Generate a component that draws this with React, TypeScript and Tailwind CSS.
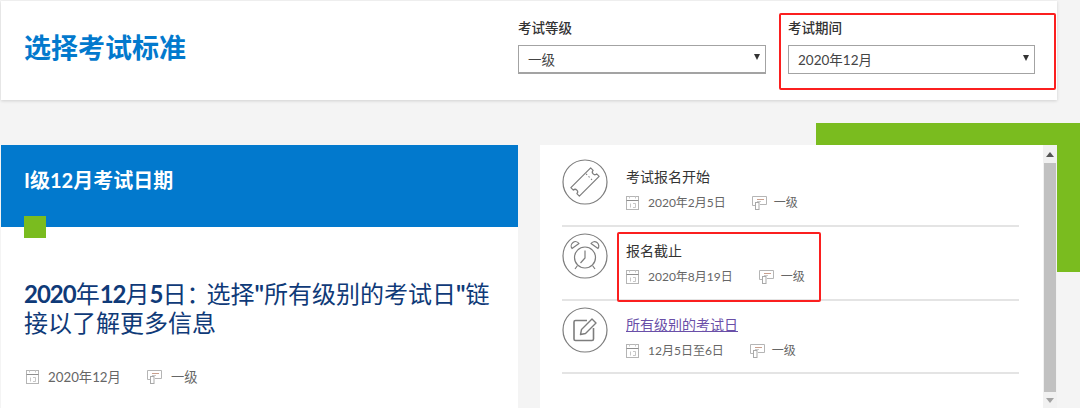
const cjk = "font-['Lato','Noto_Sans_CJK_SC',sans-serif]";

function CalendarIcon() {
    return (
        <svg width="13" height="14" viewBox="0 0 13 14" fill="none" stroke="#b5b5b5" strokeWidth="1">
            <rect x="0.5" y="0.5" width="12" height="13" />
            <path d="M0.5 4.500h12" stroke="#8f8f8f" />
            <path d="M3.500 0.500v2M9.500 0.500v2" stroke="#c9c9c9" />
            <path d="M4.500 7.500v4M7 7.500h2.500v4H7" stroke="#b9b9b9" strokeWidth="0.8" />
        </svg>
    );
}

function LevelIcon() {
    return (
        <svg width="15" height="14" viewBox="0 0 15 14" fill="none" stroke="#b5b5b5" strokeWidth="1">
            <path d="M3 9.500H0.500V0.500h14v8H8" />
            <path d="M5 3.500h7" stroke="#c9a08e" />
            <path d="M5 5.500h4" stroke="#c9c9c9" />
            <rect x="3.500" y="6.500" width="3.500" height="7" stroke="#a9a9a9" />
        </svg>
    );
}

function Meta({ date, level, gap, size = "text-[12px]", levelGap = "ml-[7px]" }: { date: string; level: string; gap: string; size?: string; levelGap?: string }) {
    return (
        <div className={`flex items-center ${size} leading-[16px] text-[#666]`}>
            <CalendarIcon />
            <span className="ml-[9px]">{date}</span>
            <span className={gap}><LevelIcon /></span>
            <span className={levelGap}>{level}</span>
        </div>
    );
}

function TicketIcon() {
    return (
        <svg width="46" height="46" viewBox="0 0 46 46" fill="none" stroke="#7d7d7d" strokeWidth="1.2">
            <circle cx="23" cy="23" r="22" />
            <g transform="rotate(-45 23 23)" strokeLinejoin="round">
                <path d="M9 17H37V20.500a2.500 2.500 0 0 0 0 5V29H9V25.500a2.500 2.500 0 0 0 0-5z" />
                <path d="M29.500 18v10" strokeDasharray="1.500 2" strokeWidth="1" />
            </g>
        </svg>
    );
}

function ClockIcon() {
    return (
        <svg width="46" height="46" viewBox="0 0 46 46" fill="none" stroke="#7d7d7d" strokeWidth="1.2">
            <circle cx="23" cy="23" r="22" />
            <circle cx="23" cy="24.500" r="10.500" />
            <path d="M23 17.500V25L18.500 30" />
            <path d="M10 15.500a4.200 4.200 0 0 1 7-5zM36 15.500a4.200 4.200 0 0 0-7-5z" strokeLinejoin="round" />
            <path d="M15.500 32.500l-2.500 3.500M30.500 32.500l2.500 3.500" />
        </svg>
    );
}

function EditIcon() {
    return (
        <svg width="46" height="46" viewBox="0 0 46 46" fill="none" stroke="#7d7d7d" strokeWidth="1.2">
            <circle cx="23" cy="23" r="22" />
            <path d="M25 13.500H13.500a1.500 1.500 0 0 0-1.500 1.500V32a1.500 1.500 0 0 0 1.500 1.500H30a1.500 1.500 0 0 0 1.500-1.500V21" strokeWidth="1.600" />
            <path d="M18.500 27.500l1-5L30 12l4 4-10.500 10.500z" strokeLinejoin="round" strokeWidth="1.400" />
        </svg>
    );
}

function Field({ label, value, width, thick }: { label: string; value: string; width: string; thick?: boolean }) {
    return (
        <div className={width}>
            <div className="text-[13.500px] leading-[18px] font-medium text-[#333] mb-[8px]">{label}</div>
            <div className={`h-[29px] border border-[#a3a3a3] bg-white flex items-center justify-between pl-[9px] pr-[5px] pt-[2px] text-[13.500px] text-[#444] ${thick ? "border-b-2" : ""}`}>
                <span>{value}</span>
                <svg width="6" height="7" viewBox="0 0 6 7" className="mb-[7px]"><path d="M0 1h6L3 7z" fill="#333" /></svg>
            </div>
        </div>
    );
}

function Row({ icon, title, meta, height }: { icon: React.ReactNode; title: React.ReactNode; meta: React.ReactNode; height: string }) {
    return (
        <div className={`${height} border-b-2 border-[#e4e4e4] flex items-start`}>
            <div className="pt-[6px] w-[64px] shrink-0">{icon}</div>
            <div className="pt-[14px]">
                <div className="text-[14px] leading-[20px] text-[#333] mb-[8px]">{title}</div>
                {meta}
            </div>
        </div>
    );
}

export default function App() {
    return (
        <div className={`relative w-[1080px] h-[408px] overflow-hidden bg-[#f4f4f4] pt-px pl-px ${cjk}`}>
            <div className="absolute left-[816px] top-[123px] w-[264px] h-[149px] bg-[#7abc1f]" />

            <header className="relative w-[1056px] h-[99px] bg-white shadow-[0_1px_3px_rgba(0,0,0,0.15)] flex items-start justify-between">
                <h1 className="ml-[23px] mt-[29px] text-[27px] leading-[36px] font-bold text-[#0279cd]">选择考试标准</h1>
                <div className="flex gap-[22px] mt-[18px] mr-[22px]">
                    <Field label="考试等级" value="一级" width="w-[248px]" thick />
                    <Field label="考试期间" value="2020年12月" width="w-[247px]" />
                </div>
            </header>

            <main className="relative flex gap-[22px] mt-[45px]">
                <section className="w-[517px] h-[263px] bg-white">
                    <div className="relative h-[82px] bg-[#0279cd] pl-[23px] pt-[21px] text-[20px] leading-[28px] font-bold text-white">
                        I级12月考试日期
                        <div className="absolute left-[23px] top-[71px] w-[22px] h-[22px] bg-[#7abc1f]" />
                    </div>
                    <h2 className="mt-[52px] ml-[23px] w-[470px] text-[24px] leading-[29px] text-[#0f3a78]">
                        <b className="tracking-[-1px]">2020</b>年<b className="tracking-[-1px]">12</b>月<b className="tracking-[-1px]">5</b>日<span className="mr-[-4px]">：</span>选择<b>"</b>所有级别的考试日<b>"</b>链接以了解更多信息
                    </h2>
                    <div className="mt-[32px] ml-[25px]">
                        <Meta date="2020年12月" level="一级" gap="ml-[26px]" size="text-[13.300px]" levelGap="ml-[9px]" />
                    </div>
                </section>

                <section className="relative w-[517px] h-[263px] bg-white pl-[22px] pr-[38px] pt-[8px]">
                    <Row
                        height="h-[74px]"
                        icon={<TicketIcon />}
                        title="考试报名开始"
                        meta={<Meta date="2020年2月5日" level="一级" gap="ml-[26px]" />}
                    />
                    <Row
                        height="h-[74px]"
                        icon={<ClockIcon />}
                        title="报名截止"
                        meta={<Meta date="2020年8月19日" level="一级" gap="ml-[26px]" />}
                    />
                    <Row
                        height="h-[73px]"
                        icon={<EditIcon />}
                        title={<a className="text-[#6a4fa8] underline">所有级别的考试日</a>}
                        meta={<Meta date="12月5日至6日" level="一级" gap="ml-[26px]" />}
                    />
                    <div className="absolute right-0 top-0 bottom-0 w-[14px] bg-[#f1f1f1] flex flex-col items-center">
                        <svg width="8" height="5" viewBox="0 0 8 5" className="mt-[7px]"><path d="M0 5h8L4 0z" fill="#555" /></svg>
                        <div className="mt-[6px] w-[12px] h-[229px] bg-[#c1c1c1]" />
                        <svg width="8" height="5" viewBox="0 0 8 5" className="mt-[6px]"><path d="M0 0h8L4 5z" fill="#a3a3a3" /></svg>
                    </div>
                </section>
            </main>

            <div className="absolute left-[779px] top-[13px] w-[277px] h-[77px] border-2 border-[#fb1f1f] rounded-[2px]" />
            <div className="absolute left-[617px] top-[232px] w-[204px] h-[70px] border-2 border-[#fb1f1f] rounded-[2px]" />
        </div>
    );
}
